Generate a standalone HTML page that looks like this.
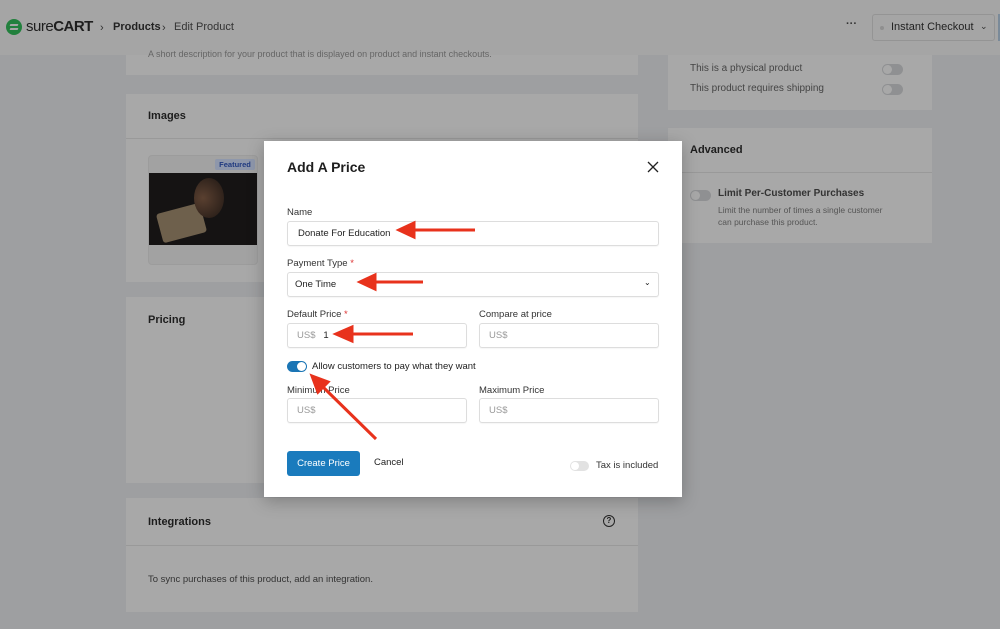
<!DOCTYPE html>
<html><head><style>
*{box-sizing:border-box;margin:0;padding:0}
body{width:1000px;height:629px;overflow:hidden;background:#9e9fa1;font-family:"Liberation Sans",sans-serif;position:relative;color:#1d1d1d}
.abs{position:absolute}
.card{position:absolute;background:#a8a8a8}
.t{position:absolute;font-size:11px}
.hdr{position:absolute;left:0;top:0;width:1000px;height:55px;background:#a5a5a5}
.tog{position:absolute;width:21px;height:11px;border-radius:6px;background:#8f9092}
.tog:after{content:"";position:absolute;left:1px;top:1px;width:9px;height:9px;border-radius:50%;background:#a8a8a8}
.modal{position:absolute;left:264px;top:141px;width:418px;height:356px;background:#fff;box-shadow:0 4px 16px rgba(0,0,0,.25)}
.lbl{position:absolute;font-size:9.5px;color:#333}
.inp{position:absolute;height:25px;border:1px solid #ddd;border-radius:3px;background:#fff;font-size:9.5px;padding-left:9px;line-height:23px;color:#333;box-shadow:0 1px 1px rgba(0,0,0,.04)}
.ph{color:#999}
.req{color:#d33}
</style></head><body>
<div class="hdr"></div>
<div class="abs" style="left:6px;top:19px;width:16px;height:16px;border-radius:50%;background:#22803d"></div>
<div class="abs" style="left:10px;top:24px;width:8px;height:2px;background:#a5a5a5;transform:skewX(-20deg)"></div>
<div class="abs" style="left:10px;top:28px;width:8px;height:2px;background:#a5a5a5;transform:skewX(-20deg)"></div>
<div class="t" style="left:26px;top:18px;font-size:15px;color:#1e1e1e;letter-spacing:-0.5px;white-space:nowrap">sure<b>CART</b></div>
<div class="t" style="left:100px;top:22px;color:#333">›</div>
<div class="t" style="left:113px;top:21px;font-weight:bold;color:#222">Products</div>
<div class="t" style="left:162px;top:22px;color:#333">›</div>
<div class="t" style="left:174px;top:21px;color:#333">Edit Product</div>
<div class="t" style="left:846px;top:18px;color:#333;font-weight:bold">···</div>
<div class="abs" style="left:872px;top:14px;width:123px;height:27px;border:1px solid #949494;border-radius:3px"></div>
<div class="abs" style="left:880px;top:26px;width:4px;height:4px;border-radius:50%;background:#8f8f8f"></div>
<div class="t" style="left:891px;top:21px;color:#222">Instant Checkout</div>
<div class="t" style="left:980px;top:21px;color:#333;font-size:9px">⌄</div>
<div class="abs" style="left:998px;top:14px;width:2px;height:27px;background:#7a8a99"></div>

<div class="card" style="left:126px;top:55px;width:512px;height:20px"></div>
<div class="t" style="left:148px;top:49px;font-size:9px;color:#666">A short description for your product that is displayed on product and instant checkouts.</div>
<div class="card" style="left:126px;top:94px;width:512px;height:188px"></div>
<div class="abs" style="left:126px;top:138px;width:512px;height:1px;background:#999"></div>
<div class="t" style="left:148px;top:110px;font-weight:bold">Images</div>
<div class="abs" style="left:148px;top:155px;width:110px;height:110px;border-radius:4px;background:#a2a2a2;border:1px solid #9c9c9c"></div>
<div class="abs" style="left:215px;top:159px;width:40px;height:11px;background:#8e97ab;border-radius:2px;font-size:7.5px;color:#203a80;font-weight:bold;text-align:center;line-height:11px">Featured</div>
<div class="abs" style="left:149px;top:173px;width:108px;height:72px;background:#151313;overflow:hidden">
<div class="abs" style="left:10px;top:35px;width:45px;height:30px;background:#6e604c;transform:rotate(-15deg);border-radius:3px"></div>
<div class="abs" style="left:45px;top:5px;width:30px;height:40px;border-radius:50%;background:radial-gradient(circle at 30% 50%,#5a4030,#201814)"></div>
</div>
<div class="card" style="left:126px;top:297px;width:512px;height:186px"></div>
<div class="t" style="left:148px;top:314px;font-weight:bold">Pricing</div>
<div class="card" style="left:126px;top:498px;width:512px;height:114px"></div>
<div class="abs" style="left:126px;top:545px;width:512px;height:1px;background:#999"></div>
<div class="t" style="left:148px;top:516px;font-weight:bold">Integrations</div>
<div class="abs" style="left:603px;top:515px;width:12px;height:12px;border:1.5px solid #222;border-radius:50%;font-size:8px;text-align:center;line-height:9px;font-weight:bold">?</div>
<div class="t" style="left:148px;top:574px;font-size:9.5px;color:#333">To sync purchases of this product, add an integration.</div>

<div class="card" style="left:668px;top:55px;width:264px;height:55px"></div>
<div class="t" style="left:690px;top:63px;font-size:10px;color:#444">This is a physical product</div>
<div class="t" style="left:690px;top:83px;font-size:10px;color:#444">This product requires shipping</div>
<div class="tog" style="left:882px;top:64px"></div>
<div class="tog" style="left:882px;top:84px"></div>
<div class="card" style="left:668px;top:128px;width:264px;height:115px"></div>
<div class="abs" style="left:668px;top:172px;width:264px;height:1px;background:#999"></div>
<div class="t" style="left:690px;top:144px;font-weight:bold">Advanced</div>
<div class="tog" style="left:690px;top:190px"></div>
<div class="t" style="left:718px;top:188px;font-size:10px;font-weight:bold;color:#333">Limit Per-Customer Purchases</div>
<div class="t" style="left:718px;top:204px;font-size:8.5px;color:#555;line-height:12px">Limit the number of times a single customer<br>can purchase this product.</div>

<div class="modal">
<div class="t" style="left:23px;top:18px;font-size:14px;font-weight:bold;color:#1e1e1e">Add A Price</div>
<svg class="abs" style="left:383px;top:20px" width="12" height="12"><path d="M1 1L11 11M11 1L1 11" stroke="#222" stroke-width="1.3"/></svg>
<div class="lbl" style="left:23px;top:66px">Name</div>
<div class="inp" style="left:23px;top:80px;width:372px;padding-left:10px;color:#222">Donate For Education</div>
<div class="lbl" style="left:23px;top:117px">Payment Type <span class="req">*</span></div>
<div class="inp" style="left:23px;top:131px;width:372px;padding-left:7px;color:#222">One Time</div>
<div class="t" style="left:380px;top:137px;font-size:8px">⌄</div>
<div class="lbl" style="left:23px;top:168px">Default Price <span class="req">*</span></div>
<div class="inp" style="left:23px;top:182px;width:180px"><span class="ph">US$</span>&nbsp;&nbsp;&nbsp;<span style="color:#222">1</span></div>
<div class="lbl" style="left:215px;top:168px">Compare at price</div>
<div class="inp" style="left:215px;top:182px;width:180px"><span class="ph">US$</span></div>
<div class="abs" style="left:23px;top:220px;width:20px;height:11px;border-radius:6px;background:#1a75b5"></div>
<div class="abs" style="left:33px;top:221px;width:9px;height:9px;border-radius:50%;background:#fff"></div>
<div class="lbl" style="left:48px;top:220px;color:#222">Allow customers to pay what they want</div>
<div class="lbl" style="left:23px;top:244px">Minimum Price</div>
<div class="inp" style="left:23px;top:257px;width:180px"><span class="ph">US$</span></div>
<div class="lbl" style="left:215px;top:244px">Maximum Price</div>
<div class="inp" style="left:215px;top:257px;width:180px"><span class="ph">US$</span></div>
<div class="abs" style="left:23px;top:310px;width:73px;height:25px;background:#1a7bbd;border-radius:3px;color:#fff;font-size:9.5px;text-align:center;line-height:25px">Create Price</div>
<div class="lbl" style="left:110px;top:316px;color:#222">Cancel</div>
<div class="abs" style="left:306px;top:320px;width:19px;height:10px;border-radius:5px;background:#e2e2e2"></div>
<div class="abs" style="left:307px;top:321px;width:8px;height:8px;border-radius:50%;background:#fff"></div>
<div class="lbl" style="left:332px;top:319px">Tax is included</div>
</div>

<svg class="abs" style="left:0;top:0" width="1000" height="629">
<g stroke="#e8321c" stroke-width="3" fill="#e8321c">
<line x1="410" y1="230" x2="475" y2="230"/><polygon points="399,230 414,223 414,237"/>
<line x1="372" y1="282" x2="423" y2="282"/><polygon points="360,282 375,275 375,289"/>
<line x1="350" y1="334" x2="413" y2="334"/><polygon points="336,334 352,327 352,341"/>
<line x1="322" y1="386" x2="376" y2="439"/><polygon points="312,376 328,382 318,392"/>
</g></svg>
</body></html>
